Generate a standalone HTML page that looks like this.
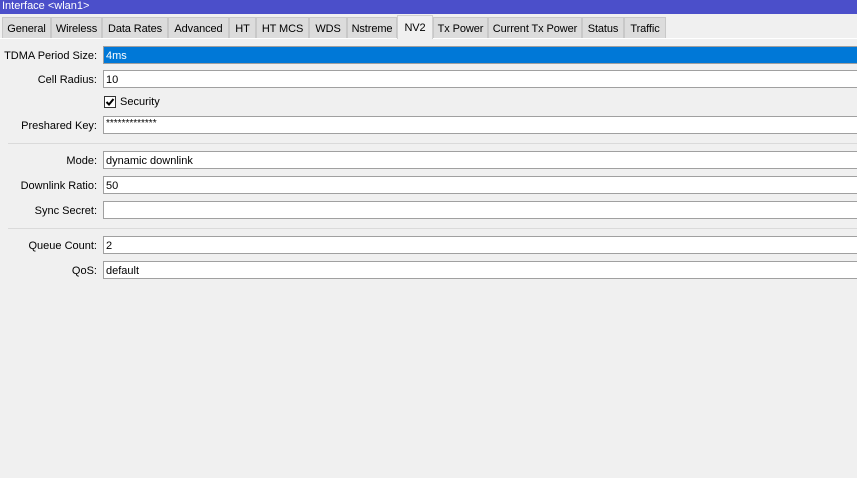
<!DOCTYPE html>
<html><head><style>
*{margin:0;padding:0;box-sizing:border-box}
body{width:857px;height:478px;background:#f0f0f0;font-family:"Liberation Sans",sans-serif;font-size:11px;color:#000;position:relative;overflow:hidden}
.title{position:absolute;left:0;top:0;width:857px;height:14px;background:#4b4fca;color:#fff;font-size:11px;line-height:13px;padding-left:2px}
.tab{position:absolute;top:17px;height:21px;background:#dcdcdc;border:1px solid #c8c8c8;border-bottom:none;line-height:22px;text-align:center;font-size:11px;white-space:nowrap;overflow:hidden;letter-spacing:-0.1px}
.tab.act{top:15px;height:24px;background:#f0f0f0;border-color:#d0d0d0;line-height:24px;z-index:2}
.tline{position:absolute;left:0;top:38px;width:857px;height:1px;background:#fff}
.lbl{position:absolute;right:760px;text-align:right;white-space:nowrap;line-height:18px}
.inp{position:absolute;left:103px;width:770px;height:18px;background:#fff;border:1px solid #a0a0a0;line-height:16px;padding-top:1px;padding-left:2px}
.sep{position:absolute;left:8px;width:849px;height:1px;background:#dadada}
</style></head><body>
<div class="title">Interface &lt;wlan1&gt;</div>
<div class="tab" style="left:2px;width:49px">General</div>
<div class="tab" style="left:51px;width:51px">Wireless</div>
<div class="tab" style="left:102px;width:66px">Data Rates</div>
<div class="tab" style="left:168px;width:61px">Advanced</div>
<div class="tab" style="left:229px;width:27px">HT</div>
<div class="tab" style="left:256px;width:53px">HT MCS</div>
<div class="tab" style="left:309px;width:38px">WDS</div>
<div class="tab" style="left:347px;width:50px">Nstreme</div>
<div class="tab act" style="left:397px;width:36px">NV2</div>
<div class="tab" style="left:433px;width:55px">Tx Power</div>
<div class="tab" style="left:488px;width:94px">Current Tx Power</div>
<div class="tab" style="left:582px;width:42px">Status</div>
<div class="tab" style="left:624px;width:42px">Traffic</div>
<div class="tline"></div>

<div class="lbl" style="top:47px">TDMA Period Size:</div>
<div class="inp" style="top:46px;background:#0078d7;color:#fff;border-color:#a0a0a0">4ms</div>
<div class="lbl" style="top:71px">Cell Radius:</div>
<div class="inp" style="top:70px">10</div>
<div style="position:absolute;left:104px;top:96px;width:12px;height:12px;border:1px solid #333;background:#fff"><svg width="10" height="10" style="position:absolute;left:0;top:0"><path d="M1.5 5 L4 7.5 L8.5 2" stroke="#000" stroke-width="2" fill="none"/></svg></div>
<div style="position:absolute;left:120px;top:95px;line-height:15px">Security</div>
<div class="lbl" style="top:117px">Preshared Key:</div>
<div class="inp" style="top:116px;font-size:10px;line-height:12px;padding-top:1px">*************</div>
<div class="sep" style="top:143px"></div>
<div class="lbl" style="top:152px">Mode:</div>
<div class="inp" style="top:151px">dynamic downlink</div>
<div class="lbl" style="top:177px">Downlink Ratio:</div>
<div class="inp" style="top:176px">50</div>
<div class="lbl" style="top:202px">Sync Secret:</div>
<div class="inp" style="top:201px"></div>
<div class="sep" style="top:228px"></div>
<div class="lbl" style="top:237px">Queue Count:</div>
<div class="inp" style="top:236px">2</div>
<div class="lbl" style="top:262px">QoS:</div>
<div class="inp" style="top:261px">default</div>
</body></html>
